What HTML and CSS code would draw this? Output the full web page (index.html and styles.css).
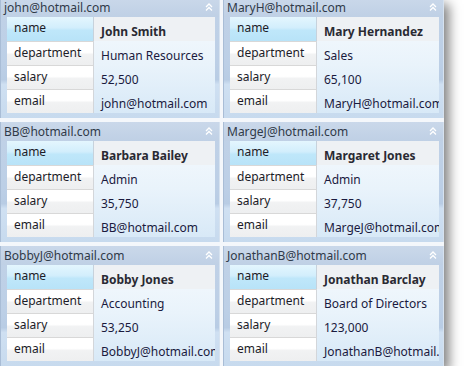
FILE: index.html
```html
<!DOCTYPE html>
<html>
<head>
<meta charset="utf-8">
<link rel="stylesheet" href="styles.css">
</head>
<body>
<div class="board">
  <section class="card">
    <div class="card-head"><span class="title">john@hotmail.com</span><svg class="chev" viewBox="0 0 8 8"><path d="M1 4 L4 1 L7 4 M1 7.5 L4 4.5 L7 7.5"/></svg></div>
    <div class="grid">
      <div class="lbl first">name</div><div class="val first">John Smith</div>
      <div class="lbl">department</div><div class="val">Human Resources</div>
      <div class="lbl">salary</div><div class="val">52,500</div>
      <div class="lbl">email</div><div class="val">john@hotmail.com</div>
    </div>
  </section>
  <section class="card">
    <div class="card-head"><span class="title">MaryH@hotmail.com</span><svg class="chev" viewBox="0 0 8 8"><path d="M1 4 L4 1 L7 4 M1 7.5 L4 4.5 L7 7.5"/></svg></div>
    <div class="grid">
      <div class="lbl first">name</div><div class="val first">Mary Hernandez</div>
      <div class="lbl">department</div><div class="val">Sales</div>
      <div class="lbl">salary</div><div class="val">65,100</div>
      <div class="lbl">email</div><div class="val">MaryH@hotmail.com</div>
    </div>
  </section>
  <section class="card">
    <div class="card-head"><span class="title">BB@hotmail.com</span><svg class="chev" viewBox="0 0 8 8"><path d="M1 4 L4 1 L7 4 M1 7.5 L4 4.5 L7 7.5"/></svg></div>
    <div class="grid">
      <div class="lbl first">name</div><div class="val first">Barbara Bailey</div>
      <div class="lbl">department</div><div class="val">Admin</div>
      <div class="lbl">salary</div><div class="val">35,750</div>
      <div class="lbl">email</div><div class="val">BB@hotmail.com</div>
    </div>
  </section>
  <section class="card">
    <div class="card-head"><span class="title">MargeJ@hotmail.com</span><svg class="chev" viewBox="0 0 8 8"><path d="M1 4 L4 1 L7 4 M1 7.5 L4 4.5 L7 7.5"/></svg></div>
    <div class="grid">
      <div class="lbl first">name</div><div class="val first">Margaret Jones</div>
      <div class="lbl">department</div><div class="val">Admin</div>
      <div class="lbl">salary</div><div class="val">37,750</div>
      <div class="lbl">email</div><div class="val">MargeJ@hotmail.com</div>
    </div>
  </section>
  <section class="card">
    <div class="card-head"><span class="title">BobbyJ@hotmail.com</span><svg class="chev" viewBox="0 0 8 8"><path d="M1 4 L4 1 L7 4 M1 7.5 L4 4.5 L7 7.5"/></svg></div>
    <div class="grid">
      <div class="lbl first">name</div><div class="val first">Bobby Jones</div>
      <div class="lbl">department</div><div class="val">Accounting</div>
      <div class="lbl">salary</div><div class="val">53,250</div>
      <div class="lbl">email</div><div class="val">BobbyJ@hotmail.com</div>
    </div>
  </section>
  <section class="card">
    <div class="card-head"><span class="title">JonathanB@hotmail.com</span><svg class="chev" viewBox="0 0 8 8"><path d="M1 4 L4 1 L7 4 M1 7.5 L4 4.5 L7 7.5"/></svg></div>
    <div class="grid">
      <div class="lbl first">name</div><div class="val first">Jonathan Barclay</div>
      <div class="lbl">department</div><div class="val">Board of Directors</div>
      <div class="lbl">salary</div><div class="val">123,000</div>
      <div class="lbl">email</div><div class="val">JonathanB@hotmail.com</div>
    </div>
  </section>
</div>
</body>
</html>
```
FILE: styles.css
```css
html, body {
  margin: 0;
  padding: 0;
  background: #ffffff;
}
body {
  font-family: "Noto Sans", "Open Sans", sans-serif;
  font-size: 12px;
  overflow: hidden;
}
.board {
  margin-top: -2px;
  width: 444px;
  display: grid;
  grid-template-columns: 220px 221px;
  grid-auto-rows: 120px;
  column-gap: 3px;
  row-gap: 4px;
  background: #f4f7fb;
  box-shadow: 5px 6px 11px rgba(0, 0, 0, 0.5);
}
.card {
  display: flex;
  flex-direction: column;
  background: linear-gradient(#c1d2e7 0%, #bccfe6 55%, #b8cce4 68%, #cfe0f2 72%, #c7daee 100%);
  border-left: 1px solid #a9bdd6;
  border-right: 1px solid #d6e2ef;
}
.card-head {
  height: 19px;
  flex: none;
  display: flex;
  align-items: center;
  justify-content: space-between;
  padding: 1px 6px 0 3px;
  box-sizing: border-box;
  background: linear-gradient(#cad8ea, #bfd0e5);
}
.title {
  color: #303a48;
  font-size: 12px;
  line-height: 16px;
}
.chev {
  width: 8px;
  height: 8px;
  margin-top: -2px;
}
.chev path {
  fill: none;
  stroke: #ffffff;
  stroke-width: 1.3;
}
.grid {
  margin: 0 4px 0 6px;
  display: grid;
  grid-template-columns: 87px 1fr;
  grid-auto-rows: 24px;
  background: linear-gradient(#f4f9fd, #e9f3fb 50%, #d8e9f7);
}
.lbl, .val {
  overflow: hidden;
  white-space: nowrap;
  box-sizing: border-box;
  color: #1c1c28;
}
.lbl {
  padding: 2px 0 0 7px;
  background: linear-gradient(#ffffff 0%, #ffffff 45%, #f1f2f3 55%, #eeeff0 100%);
  border-right: 1px solid #d3d6da;
  border-top: 1px solid #d8d8d8;
}
.lbl.first {
  background: linear-gradient(#e4f6fe 0%, #d2eefc 45%, #bfe7fa 55%, #b8e3f8 100%);
  border-top: 0;
  border-right-color: #c7d2dc;
}
.val {
  padding: 6px 0 0 7px;
  color: #1a1a3e;
}
.val.first {
  background: #eef1f4;
  font-weight: bold;
  color: #2a2a33;
}
```
